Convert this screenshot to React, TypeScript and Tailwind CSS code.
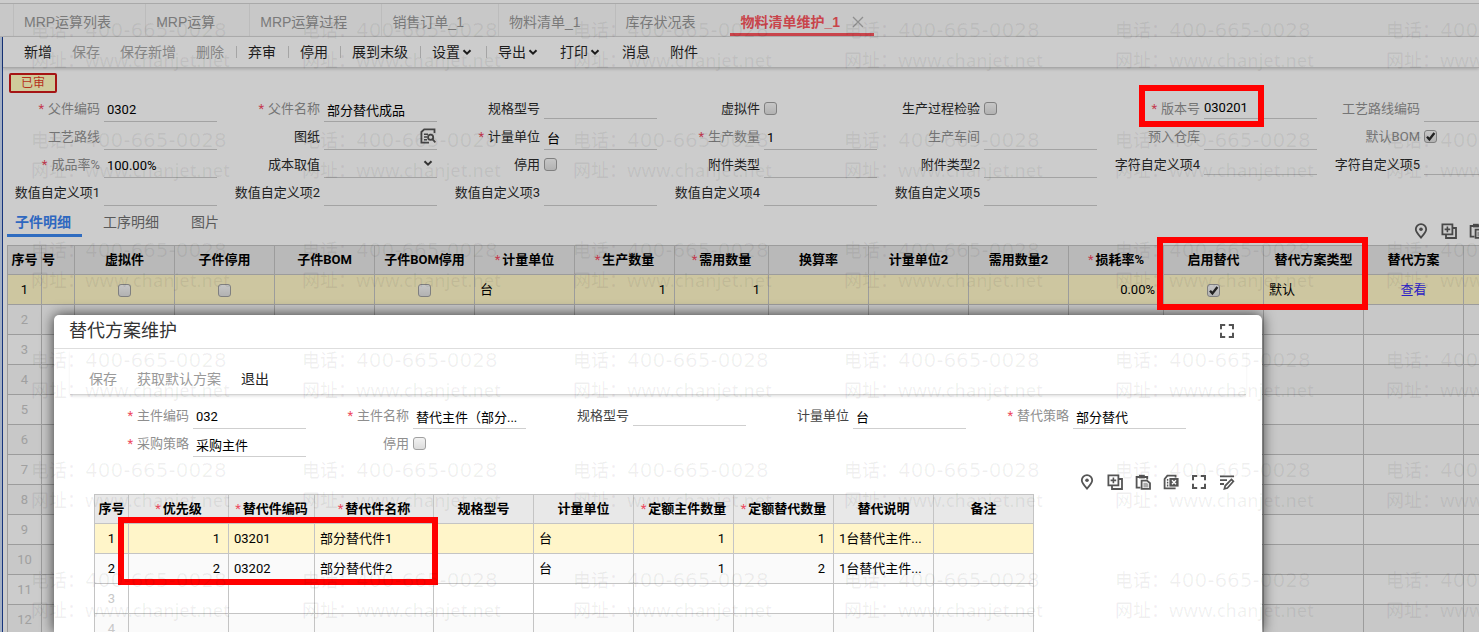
import { useId, type ReactNode } from "react";
import clsx from "clsx";

type FieldKind = "text" | "short" | "check" | "select" | "file";

type FieldDef = {
  label: string;
  kind?: FieldKind;
  value?: string;
  checked?: boolean;
  required?: boolean;
  muted?: boolean;
};

type Column = {
  title: string;
  width: number;
  required?: boolean;
  align?: "left" | "center" | "right";
  clipped?: boolean;
};

const tabs = ["MRP运算列表", "MRP运算", "MRP运算过程", "销售订单_1", "物料清单_1", "库存状况表"];

const mainFields: FieldDef[] = [
  { label: "父件编码", value: "0302", required: true, muted: true },
  { label: "父件名称", value: "部分替代成品", required: true, muted: true },
  { label: "规格型号", kind: "short" },
  { label: "虚拟件", kind: "check" },
  { label: "生产过程检验", kind: "check" },
  { label: "版本号", kind: "short", value: "030201", required: true, muted: true },
  { label: "工艺路线编码", muted: true },
  { label: "工艺路线", muted: true },
  { label: "图纸", kind: "file" },
  { label: "计量单位", value: "台", required: true },
  { label: "生产数量", value: "1", required: true, muted: true },
  { label: "生产车间", muted: true },
  { label: "预入仓库", muted: true },
  { label: "默认BOM", kind: "check", checked: true, muted: true },
  { label: "成品率%", value: "100.00%", required: true, muted: true },
  { label: "成本取值", kind: "select" },
  { label: "停用", kind: "check" },
  { label: "附件类型" },
  { label: "附件类型2" },
  { label: "字符自定义项4", kind: "short" },
  { label: "字符自定义项5", kind: "short" },
  { label: "数值自定义项1" },
  { label: "数值自定义项2" },
  { label: "数值自定义项3" },
  { label: "数值自定义项4" },
  { label: "数值自定义项5" },
];

const planFields: FieldDef[] = [
  { label: "主件编码", value: "032", required: true, muted: true },
  { label: "主件名称", value: "替代主件（部分...", required: true, muted: true },
  { label: "规格型号", kind: "short" },
  { label: "计量单位", value: "台" },
  { label: "替代策略", value: "部分替代", required: true, muted: true },
  { label: "采购策略", value: "采购主件", required: true, muted: true },
  { label: "停用", kind: "check", muted: true },
];

const mainColumns: Column[] = [
  { title: "序号", width: 34, align: "center" },
  { title: "号", width: 33, clipped: true },
  { title: "虚拟件", width: 100, align: "center" },
  { title: "子件停用", width: 100, align: "center" },
  { title: "子件BOM", width: 100 },
  { title: "子件BOM停用", width: 100, align: "center" },
  { title: "计量单位", width: 100, required: true },
  { title: "生产数量", width: 100, required: true, align: "right" },
  { title: "需用数量", width: 94, required: true, align: "right" },
  { title: "换算率", width: 100 },
  { title: "计量单位2", width: 100 },
  { title: "需用数量2", width: 100 },
  { title: "损耗率%", width: 95, required: true, align: "right" },
  { title: "启用替代", width: 100, align: "center" },
  { title: "替代方案类型", width: 100 },
  { title: "替代方案", width: 100, align: "center" },
  { title: "", width: 100 },
];

const planColumns: Column[] = [
  { title: "序号", width: 34, align: "center" },
  { title: "优先级", width: 100, required: true, align: "right" },
  { title: "替代件编码", width: 86, required: true },
  { title: "替代件名称", width: 119, required: true },
  { title: "规格型号", width: 100 },
  { title: "计量单位", width: 100 },
  { title: "定额主件数量", width: 100, required: true, align: "right" },
  { title: "定额替代数量", width: 100, required: true, align: "right" },
  { title: "替代说明", width: 100 },
  { title: "备注", width: 100 },
];

function Star({ light }: { light?: boolean }) {
  return <span className={light ? "text-[#ee4a60]" : "text-[#c43a4e]"}>*</span>;
}

function Check({ id, label, checked, light }: { id?: string; label?: string; checked?: boolean; light?: boolean }) {
  return (
    <span className="relative inline-block size-[13px] align-middle">
      <input
        id={id}
        aria-label={label}
        type="checkbox"
        defaultChecked={checked}
        className={clsx(
          "peer block size-[13px] appearance-none rounded-[3px] border bg-linear-to-b",
          light ? "border-[#a0a0a0] from-[#f2f2f2] to-[#dcdcdc]" : "border-[#808080] from-[#c6c6c6] to-[#b2b2b2]"
        )}
      />
      <svg
        viewBox="0 0 13 13"
        className="pointer-events-none absolute inset-0 hidden size-[13px] peer-checked:block"
        fill="none"
        stroke="#222"
        strokeWidth="2.4"
      >
        <path d="M3 6.8 5.4 9.4 10.4 3" />
      </svg>
    </span>
  );
}

function Chevron() {
  return (
    <svg viewBox="0 0 14 14" className="size-3.5" fill="none" stroke="currentColor" strokeWidth="2">
      <path d="M3.5 5.2 7 8.7l3.5-3.5" />
    </svg>
  );
}

function Glyph({ children }: { children: ReactNode }) {
  return (
    <svg viewBox="0 0 16 16" className="size-4" fill="none" stroke="currentColor" strokeWidth="1.8">
      {children}
    </svg>
  );
}

function ExpandGlyph() {
  return (
    <Glyph>
      <path strokeWidth="2" d="M2 6.2V2h4.2M9.8 2H14v4.2M14 9.8V14H9.8M6.2 14H2V9.8" />
    </Glyph>
  );
}

function FileSearchGlyph() {
  return (
    <Glyph>
      <path d="M14.5 5V1.3H4.2L1.4 4v10.7H9" />
      <path strokeWidth="1.4" d="M4 6.2h4M4 9h3M4 11.8h3" />
      <circle cx="10.6" cy="9.2" r="2.6" />
      <path d="m12.4 11.2 3 3.2" />
    </Glyph>
  );
}

function GridTools() {
  const items = [
    {
      name: "定位",
      icon: (
        <Glyph>
          <path d="M8 14.6C5 11.4 2.8 8.9 2.8 6.3a5.2 5.2 0 0 1 10.4 0c0 2.6-2.2 5.1-5.2 8.3Z" />
          <circle cx="8" cy="6.2" r="1.8" fill="currentColor" stroke="none" />
        </Glyph>
      ),
    },
    {
      name: "增行",
      icon: (
        <Glyph>
          <path d="M1.4 1.4h10v10h-10z" />
          <path d="M11.6 5H15v10H5v-3.4" />
          <path strokeWidth="1.6" d="M6.4 3.6v5.6M3.6 6.4h5.6" />
        </Glyph>
      ),
    },
    {
      name: "粘贴",
      icon: (
        <Glyph>
          <path d="M5.5 13.6H1.6V3h10.6v2.6" />
          <path fill="currentColor" stroke="none" d="M4 .8h5.8v3.6H4z" />
          <path d="M6.6 6.6h5.4l3 2.6v5.6H6.6z" />
          <path fill="currentColor" fillOpacity=".5" stroke="none" d="M8.4 8.8h3.4l1.6 1.4v3.2h-5z" />
        </Glyph>
      ),
    },
    {
      name: "删行",
      icon: (
        <Glyph>
          <path d="M12.6 14.4H1.6V5l2.8-3.4h8.2v2" />
          <path strokeWidth="1.4" strokeDasharray="1.8 1" d="M4.6 5v7.6" />
          <path fill="currentColor" stroke="none" d="M6.4 4h9.2v8.6H6.4z" />
          <path stroke="#fff" strokeWidth="1.4" d="m9 6.3 4 4M13 6.3l-4 4" />
        </Glyph>
      ),
    },
    { name: "全屏", icon: <ExpandGlyph /> },
    {
      name: "批改",
      icon: (
        <Glyph>
          <path d="M1 2.4h14M1 6.2h7M1 10h4" />
          <path strokeWidth="1.7" d="m12.4 5.4 2 2-6 6.6-3 .8.8-3z" />
        </Glyph>
      ),
    },
  ];
  return (
    <>
      {items.map((item) => (
        <button key={item.name} type="button" aria-label={item.name} className="shrink-0">
          {item.icon}
        </button>
      ))}
    </>
  );
}

function Field({ field, light }: { field: FieldDef; light?: boolean }) {
  const id = useId();
  const kind = field.kind ?? "text";
  const line = light ? "border-[#cfcfcf]" : "border-[#a3a3a3]";
  return (
    <div className="flex h-7 items-center">
      <label
        htmlFor={id}
        className={clsx(
          "mr-1 flex w-24 shrink-0 justify-end gap-1 pt-0.5 whitespace-nowrap",
          field.muted ? (light ? "text-[#8e8e8e]" : "text-[#757575]") : light ? "text-[#444]" : "text-[#222]"
        )}
      >
        {field.required && <Star light={light} />}
        {field.label}
      </label>
      {kind === "check" && <Check id={id} checked={field.checked} light={light} />}
      {kind === "text" && (
        <input
          id={id}
          defaultValue={field.value}
          className={clsx("h-7 w-[113px] border-b pt-1 pl-[3px] text-black", line)}
        />
      )}
      {kind === "short" && (
        <input
          id={id}
          defaultValue={field.value}
          className={clsx("h-[25px] w-[113px] self-start border-b pt-0.5 text-black", line)}
        />
      )}
      {kind === "file" && (
        <div className={clsx("flex h-7 w-[113px] items-center border-b", line)}>
          <input id={id} className="w-24 min-w-0" />
          <button type="button" aria-label="查看图纸" className="text-[#444]">
            <FileSearchGlyph />
          </button>
        </div>
      )}
      {kind === "select" && (
        <div className={clsx("relative h-7 w-[113px] border-b", line)}>
          <select id={id} className="h-full w-full appearance-none">
            <option></option>
          </select>
          <span className="pointer-events-none absolute top-1.5 right-0.5 text-[#333]">
            <Chevron />
          </span>
        </div>
      )}
    </div>
  );
}

function DataTable({
  columns,
  rows,
  total,
  light,
}: {
  columns: Column[];
  rows: ReactNode[][];
  total: number;
  light?: boolean;
}) {
  const border = light ? "border-[#c4c4c4]" : "border-[#9c9c9c]";
  const width = columns.reduce((sum, col) => sum + col.width, 0);
  return (
    <table className="table-fixed border-collapse text-black" style={{ width }}>
      <colgroup>
        {columns.map((col, i) => (
          <col key={i} style={{ width: col.width }} />
        ))}
      </colgroup>
      <thead>
        <tr className={clsx("h-[29px]", light ? "bg-[#e8e8e8]" : "bg-[#b9b9b9]")}>
          {columns.map((col, i) => (
            <th
              key={i}
              className={clsx(
                "overflow-hidden border p-0 font-bold whitespace-nowrap",
                border,
                col.clipped ? "text-left" : "text-center"
              )}
            >
              {col.required && (
                <span className="mr-0.5 font-normal">
                  <Star light={light} />
                </span>
              )}
              {col.title}
            </th>
          ))}
        </tr>
      </thead>
      <tbody>
        {Array.from({ length: total }, (_, r) => {
          const row = rows[r];
          return (
            <tr
              key={r}
              className={clsx(
                "h-[30px]",
                r === 0 && (light ? "bg-[#fff5c9]" : "bg-[#cdc6a0]"),
                r > 0 && r % 2 === 1 && (light ? "bg-[#fafafa]" : "bg-[#c8c8c8]")
              )}
            >
              {columns.map((col, c) => (
                <td
                  key={c}
                  className={clsx(
                    "overflow-hidden border p-0 whitespace-nowrap",
                    border,
                    col.align === "center" && "text-center",
                    col.align === "right" && "pr-2 text-right",
                    !col.align && "pl-[5px]",
                    !row && (light ? "text-[#c8c8c8]" : "text-[#a0a0a0]")
                  )}
                >
                  {c === 0 ? r + 1 : row?.[c - 1]}
                </td>
              ))}
            </tr>
          );
        })}
      </tbody>
    </table>
  );
}

function Separator() {
  return <span className="mr-[11px] ml-3 h-3 w-px bg-[#a5a5a5]" />;
}

function Action({ children, disabled, menu }: { children: ReactNode; disabled?: boolean; menu?: boolean }) {
  return (
    <button
      type="button"
      disabled={disabled}
      className={clsx("flex items-center", disabled ? "text-[#858585]" : "text-[#1c1c1c]")}
    >
      {children}
      {menu && <Chevron />}
    </button>
  );
}

function Watermark() {
  return (
    <div
      aria-hidden="true"
      className="pointer-events-none absolute inset-0 overflow-hidden pt-[15px] pl-[31px] text-lg leading-[30px] font-medium text-black/6 select-none"
    >
      <div className="grid w-max grid-cols-[repeat(6,271px)] gap-y-[50px] font-['Noto_Sans','Noto_Sans_CJK_SC',sans-serif]">
        {Array.from({ length: 36 }, (_, i) => (
          <div key={i} className="whitespace-nowrap">
            <p className="flex h-[30px]">
              电话：<span className="font-['DejaVu_Sans',sans-serif] text-xl leading-[30px]">400-665-0028</span>
            </p>
            <p className="h-[30px]">网址：www.chanjet.net</p>
          </div>
        ))}
      </div>
    </div>
  );
}

function PlanDialog() {
  return (
    <section
      role="dialog"
      aria-label="替代方案维护"
      className="absolute top-[315px] right-[217px] bottom-0 left-[54px] rounded-t-[5px] bg-white shadow-[0_0_14px_rgba(0,0,0,0.75)]"
    >
      <header className="flex h-[34px] items-center justify-between border-b border-[#dedede] pr-[27px] pb-0.5 pl-[15px]">
        <h2 className="text-lg leading-6 text-[#333]">替代方案维护</h2>
        <button type="button" aria-label="最大化" className="text-[#555]">
          <ExpandGlyph />
        </button>
      </header>
      <div className="mx-4 flex h-[46px] items-end gap-5 border-b border-[#d4d4d4] pb-[3px] pl-[19px] text-sm leading-6 shadow-[0_2px_3px_-1px_rgba(0,0,0,0.15)]">
        <button type="button" disabled className="text-[#9a9a9a]">保存</button>
        <button type="button" disabled className="text-[#9a9a9a]">获取默认方案</button>
        <button type="button" className="text-[#222]">退出</button>
      </div>
      <form className="mt-1.5 ml-[39px] grid grid-cols-[repeat(5,220px)]">
        {planFields.map((field) => (
          <Field key={field.label} field={field} light />
        ))}
      </form>
      <div className="flex h-[37px] items-end justify-end gap-3 pr-[27px] pb-1 text-[#555]">
        <GridTools />
      </div>
      <div className="relative ml-10 h-[138px] overflow-hidden">
        <DataTable
          light
          columns={planColumns}
          total={4}
          rows={[
            ["1", "03201", "部分替代件1", "", "台", "1", "1", "1台替代主件...", ""],
            ["2", "03202", "部分替代件2", "", "台", "1", "2", "1台替代主件...", ""],
          ]}
        />
        <div className="pointer-events-none absolute top-[23px] left-6 h-[68px] w-80 border-6 border-[#ff0000]" />
      </div>
    </section>
  );
}

export default function App() {
  return (
    <main className="relative flex h-screen flex-col overflow-hidden bg-[#cccccc] font-[Roboto,'Noto_Sans_CJK_SC',sans-serif] text-[13px] leading-5">
      {/* Open documents */}
      <nav className="mt-[3px] flex h-[34px] shrink-0 items-end border-t border-b border-t-[#a9a9a9] border-b-[#b0b0b0] bg-[#c8c8c8] pl-[13px] font-['Liberation_Sans','Noto_Sans_CJK_SC',sans-serif] text-sm">
        {tabs.map((tab) => (
          <a key={tab} href="#" className="h-8 pt-2 pr-[34px] pl-[11px] whitespace-nowrap text-[#7a7a7a] shadow-[inset_1px_0_#bcbcbc]">
            {tab}
          </a>
        ))}
        <a href="#" className="flex h-8 items-start gap-3 border-b-3 border-[#c9444b] pt-2 pr-2.5 pl-[11px] font-bold whitespace-nowrap text-[#c9444b]">
          物料清单维护_1
          <svg viewBox="0 0 12 12" className="mt-1 size-3" fill="none" stroke="#8f8f8f" strokeWidth="1.3">
            <path d="m1 1 10 10M11 1 1 11" />
          </svg>
        </a>
      </nav>

      <div className="flex-1 border-l-2 border-[#a4b0c4]">
        <div className="h-full border-l border-[#16347c]">
          {/* Toolbar */}
          <div className="flex h-[31px] items-center border-b border-[#a8a8a8] pl-[21px] text-sm shadow-[0_1px_3px_rgba(0,0,0,0.2)]">
            <div className="flex gap-5">
              <Action>新增</Action>
              <Action disabled>保存</Action>
              <Action disabled>保存新增</Action>
              <Action disabled>删除</Action>
            </div>
            <Separator />
            <Action>弃审</Action>
            <Separator />
            <Action>停用</Action>
            <Separator />
            <Action>展到末级</Action>
            <Separator />
            <Action menu>设置</Action>
            <Separator />
            <div className="flex gap-5">
              <Action menu>导出</Action>
              <Action menu>打印</Action>
              <Action>消息</Action>
              <Action>附件</Action>
            </div>
          </div>

          {/* Bill header */}
          <div className="h-[26px] pt-[5px] pl-1.5">
            <span className="flex h-5 w-12 items-center justify-center rounded-xs border-2 border-[#a51414] bg-[#cfcb9b] text-xs text-[#b5301c]">
              已审
            </span>
          </div>
          <form className="ml-px grid grid-cols-[repeat(7,220px)]">
            {mainFields.map((field) => (
              <Field key={field.label} field={field} />
            ))}
          </form>

          {/* Detail tabs */}
          <div className="flex h-[39px] pl-1 text-sm">
            <a href="#" className="mr-[21px] h-[31px] border-b-3 border-[#2f6cc0] pt-1.5 pr-[11px] pl-2 font-bold text-[#2f68c0]">
              子件明细
            </a>
            <a href="#" className="mr-8 pt-1.5 text-[#5a5a5a]">工序明细</a>
            <a href="#" className="pt-1.5 text-[#5a5a5a]">图片</a>
            <div className="ml-auto flex w-[66px] items-start gap-3 overflow-hidden pt-[17px] text-[#484848]">
              <GridTools />
            </div>
          </div>

          <div className="ml-1">
            <DataTable
              columns={mainColumns}
              total={13}
              rows={[
                [
                  "",
                  <Check label="虚拟件" />,
                  <Check label="子件停用" />,
                  "",
                  <Check label="子件BOM停用" />,
                  "台",
                  "1",
                  "1",
                  "",
                  "",
                  "",
                  "0.00%",
                  <Check label="启用替代" checked />,
                  "默认",
                  <a href="#" className="text-[#2c22c4]">查看</a>,
                  "",
                ],
              ]}
            />
          </div>
        </div>
      </div>

      <PlanDialog />
      <Watermark />

      {/* Highlight frames */}
      <div className="pointer-events-none absolute top-[85px] left-[1139px] h-[42px] w-[125px] border-6 border-[#ff0000]" />
      <div className="pointer-events-none absolute top-[237px] left-[1157px] h-[73px] w-[211px] border-6 border-[#ff0000]" />
    </main>
  );
}
